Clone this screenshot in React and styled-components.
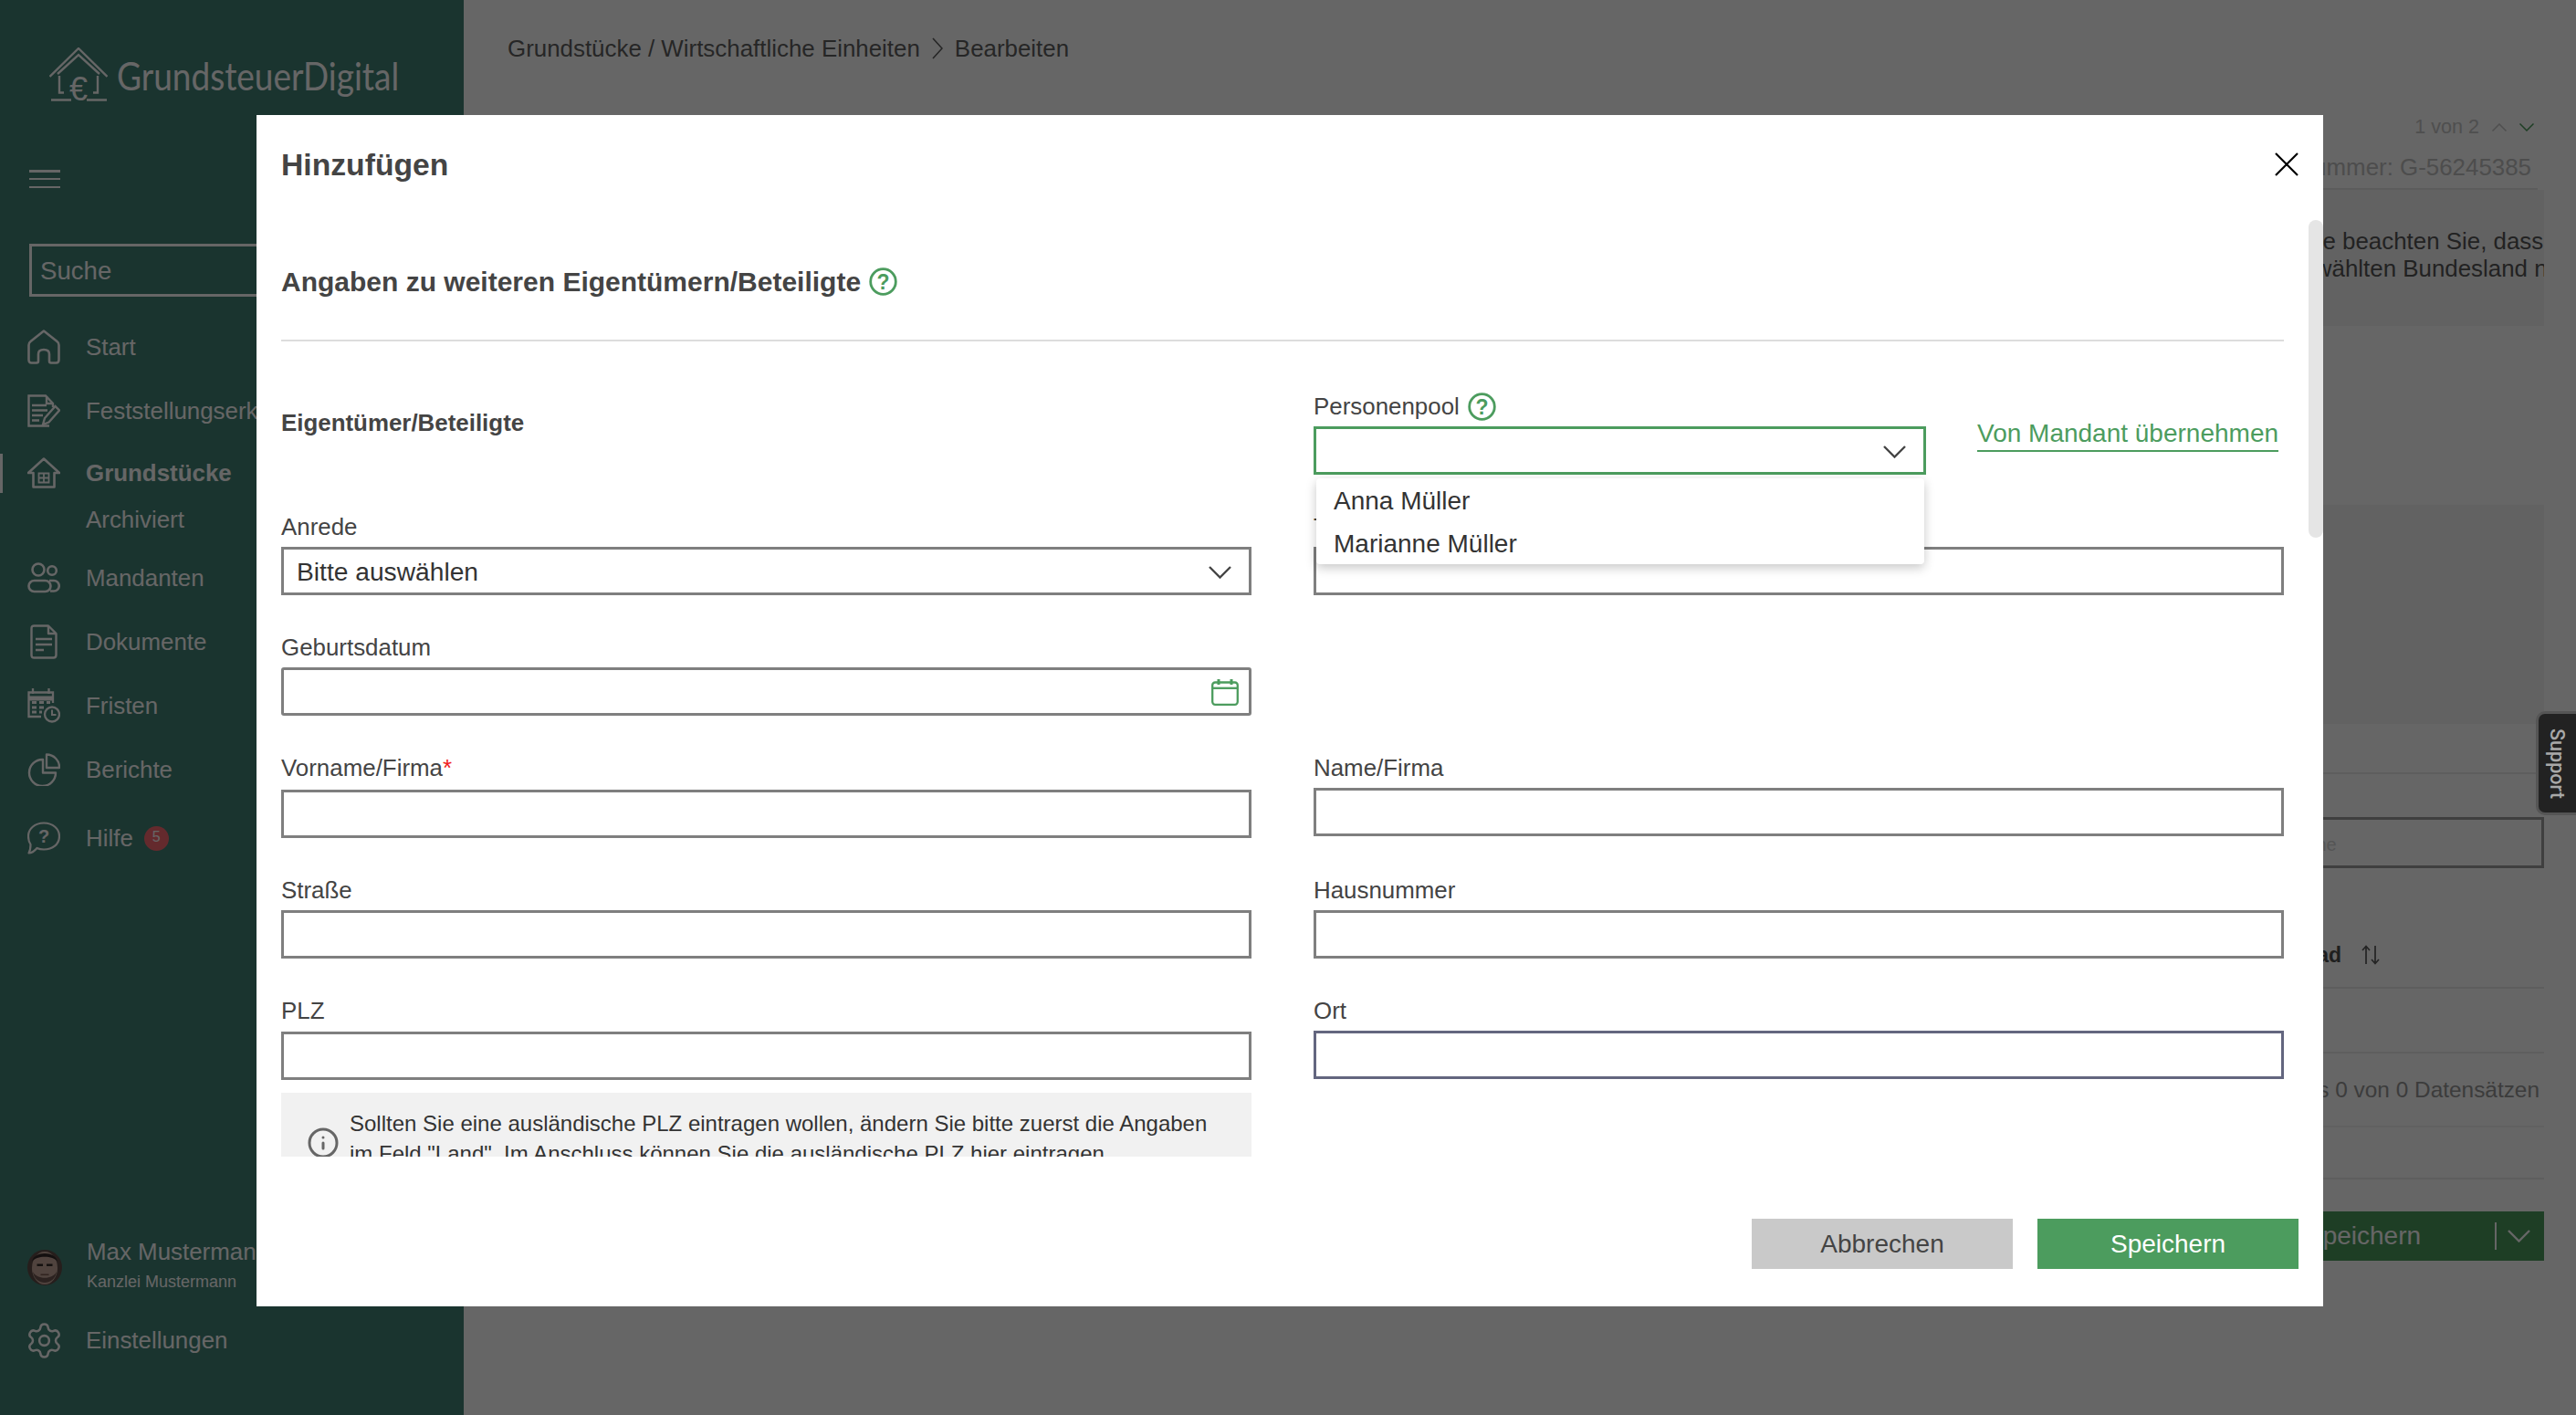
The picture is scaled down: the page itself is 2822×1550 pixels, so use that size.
import React from "react";
import styled, { createGlobalStyle } from "styled-components";
import { Settings, Info } from "lucide-react";

const GlobalStyle = createGlobalStyle`
  html, body {
    margin: 0;
    padding: 0;
    background: #fff;
  }
  * {
    box-sizing: border-box;
  }
  body {
    font-family: "Liberation Sans", Arial, sans-serif;
  }
`;

const green = "#4c9c5e";

const Page = styled.div`
  display: flex;
  width: 2822px;
  height: 1550px;
  overflow: hidden;
  background: #fff;
`;

/* ---------- sidebar ---------- */

const Sidebar = styled.aside`
  display: flex;
  flex-direction: column;
  flex: 0 0 508px;
  height: 100%;
  overflow: hidden;
  background: #428276;
  color: #fff;
`;

const LogoRow = styled.div`
  display: flex;
  align-items: center;
  height: 60px;
  margin: 52px 0 0 54px;
`;

const LogoText = styled.span`
  margin-left: 10px;
  font-family: "Lato", sans-serif;
  font-weight: 400;
  font-size: 43px;
  white-space: nowrap;
  transform: scaleX(0.86);
  transform-origin: left center;
`;

const Burger = styled.div`
  display: flex;
  flex-direction: column;
  justify-content: space-between;
  width: 34px;
  height: 20px;
  margin: 74px 0 0 32px;

  span {
    display: block;
    height: 2.5px;
    background: #fff;
  }
`;

const Search = styled.div`
  display: flex;
  align-items: center;
  width: 444px;
  height: 58px;
  margin: 61px 0 20px 32px;
  padding: 2px 0 0 9px;
  border: 3px solid #fff;
  font-size: 27.6px;
`;

const NavRow = styled.div`
  position: relative;
  display: flex;
  align-items: center;
  gap: 28px;
  height: ${(p) => p.$h || 70}px;
  margin-top: ${(p) => p.$top || 0}px;
  padding-left: 30px;
  font-size: 25.9px;
  font-weight: ${(p) => (p.$active ? 700 : 400)};
  white-space: nowrap;

  ${(p) =>
    p.$active &&
    `&::before {
      content: "";
      position: absolute;
      left: 0;
      top: 12px;
      width: 3px;
      height: 43px;
      background: #fff;
    }`}
`;

const NavIcon = styled.span`
  display: flex;
  justify-content: center;
  flex: 0 0 36px;
  width: 36px;
  min-width: 0;

  svg {
    flex: none;
  }
`;

const SubNav = styled.div`
  height: 36px;
  padding-left: 94px;
  font-size: 25.9px;
  line-height: 36px;
`;

const Badge = styled.span`
  display: flex;
  align-items: center;
  justify-content: center;
  width: 27px;
  height: 27px;
  margin-left: -16px;
  padding-bottom: 3px;
  border-radius: 50%;
  background: #fb6a72;
  font-size: 16px;
`;

const SideFooter = styled.div`
  margin-top: auto;
  padding-bottom: 47px;
`;

const UserRow = styled.div`
  display: flex;
  align-items: center;
  gap: 27px;
  height: 66px;
  margin-bottom: 12px;
  padding-left: 30px;
`;

const UserText = styled.div`
  padding-bottom: 4px;
`;

const UserName = styled.div`
  font-size: 25.9px;
  line-height: 36px;
  white-space: nowrap;
`;

const UserFirm = styled.div`
  font-size: 18px;
  line-height: 30px;
  white-space: nowrap;
`;

/* ---------- page behind the dialog ---------- */

const Main = styled.main`
  display: flex;
  flex-direction: column;
  flex: 1;
  padding: 35px 35px 0 48px;
  color: #5f5f5f;
`;

const Breadcrumb = styled.div`
  display: flex;
  align-items: center;
  gap: 13px;
  height: 36px;
  font-size: 25.9px;
  white-space: nowrap;
`;

const BackPanel = styled.div`
  display: flex;
  flex-direction: column;
  align-self: flex-end;
  width: 287px;
  margin-top: 53px;
`;

const Pager = styled.div`
  display: flex;
  justify-content: flex-end;
  align-items: center;
  gap: 14px;
  height: 30px;
  padding-right: 11px;
  color: #c5c5c5;
  font-size: 21.6px;
`;

const NumberRow = styled.div`
  display: flex;
  justify-content: flex-end;
  align-items: center;
  height: 47px;
  margin-top: 7px;
  padding-right: 7px;
  margin-right: 7px;
  border-bottom: 2px solid #e6e6e6;
  color: #c0c0c0;
  font-size: 25.9px;
  white-space: nowrap;
`;

const Notice = styled.div`
  height: 149px;
  padding: 41px 0 0 7px;
  overflow: hidden;
  background: #f5f5f5;
  color: #555;
  font-size: 25.9px;
  line-height: 30px;
  white-space: nowrap;
`;

const NoticeGap = styled.div`
  height: 240px;
  margin-top: 196px;
  background: #f5f5f5;
`;

const BackRow = styled.div`
  display: flex;
  justify-content: flex-end;
  align-items: center;
  gap: ${(p) => p.$gap || 0}px;
  height: ${(p) => p.$h}px;
  padding: ${(p) => p.$pad || "0"};
  border-bottom: 2px solid ${(p) => p.$line || "#ebebeb"};
  font-size: ${(p) => p.$size || 24.4}px;
  color: ${(p) => p.$color || "#969696"};
  font-weight: ${(p) => p.$weight || 400};
  white-space: nowrap;
  overflow: hidden;

  svg {
    flex: none;
  }
`;

const BackInput = styled.div`
  display: flex;
  align-items: center;
  height: 56px;
  margin-top: 47px;
  padding-top: 4px;
  border: 3px solid #9d9d9d;
  color: #d4d4d4;
  font-size: 20px;
`;

const BackButton = styled.div`
  display: flex;
  align-items: center;
  justify-content: space-between;
  height: 54px;
  margin-top: 35px;
  padding: 0 15px 0 26px;
  background: ${green};
  color: #fff;
  font-size: 28px;
  overflow: hidden;
  white-space: nowrap;
`;

const BackButtonEnd = styled.span`
  display: flex;
  align-items: center;
  padding-left: 12px;
  height: 30px;
  border-left: 2px solid #fff;
`;

/* ---------- dialog ---------- */

const Overlay = styled.div`
  position: fixed;
  inset: 0;
  background: rgba(0, 0, 0, 0.6);
`;

const SupportTab = styled.div`
  position: fixed;
  top: 779px;
  right: 0;
  display: flex;
  align-items: center;
  justify-content: center;
  width: 44px;
  height: 114px;
  border: 3px solid #555;
  border-right: 0;
  border-radius: 10px 0 0 10px;
  background: #222;
  color: #a8a8a8;
  font-family: "Roboto", sans-serif;
  font-weight: 500;
  font-size: 21.6px;
  writing-mode: vertical-rl;
`;

const Modal = styled.div`
  position: fixed;
  left: 281px;
  top: 126px;
  display: flex;
  flex-direction: column;
  width: 2264px;
  height: 1305px;
  background: #fff;
  color: #444;
`;

const ModalHead = styled.div`
  display: flex;
  align-items: center;
  justify-content: space-between;
  height: 108px;
  margin-bottom: 7px;
  padding: 0 27px;
`;

const ModalTitle = styled.h2`
  margin: 0;
  font-size: 33.7px;
  font-weight: 700;
`;

const ModalBody = styled.div`
  position: relative;
  height: 1026px;
  padding: 48px 43px 0 27px;
  overflow: hidden;
`;

const ScrollThumb = styled.div`
  position: absolute;
  top: 0;
  right: 0;
  width: 16px;
  height: 348px;
  border-radius: 8px;
  background: #e5e5e5;
`;

const SectionHead = styled.div`
  display: flex;
  align-items: center;
  gap: 9px;
  height: 85px;
  padding-bottom: 45px;
  border-bottom: 2px solid #ddd;
`;

const SectionTitle = styled.h3`
  margin: 2px 0 0;
  font-size: 30px;
  font-weight: 700;
  line-height: 40px;
`;

const FormGrid = styled.div`
  display: grid;
  grid-template-columns: 1063px 1063px;
  column-gap: 68px;
  row-gap: 41px;
  margin-top: 55px;
`;

const GroupTitle = styled.div`
  margin-top: 18px;
  font-size: 25.9px;
  font-weight: 700;
  line-height: 32px;
`;

const Field = styled.div`
  position: relative;
`;

const Label = styled.label`
  display: flex;
  align-items: center;
  gap: 9px;
  height: 32px;
  margin-bottom: ${(p) => p.$gap || 6}px;
  font-size: 25.9px;
  line-height: 32px;
`;

const Required = styled.span`
  margin-left: -9px;
  color: #f02020;
`;

const TextInput = styled.input`
  display: block;
  width: 100%;
  height: 53px;
  padding: 0 13px;
  border: 3px solid ${(p) => p.$border || "#7f7f7f"};
  border-radius: 0;
  outline: none;
  background: #fff;
  font-family: inherit;
  font-size: 28px;
`;

const SelectBox = styled.div`
  display: flex;
  align-items: center;
  justify-content: space-between;
  height: 53px;
  padding: 2px ${(p) => p.$right || 19}px 0 14px;
  border: 3px solid ${(p) => p.$border || "#7f7f7f"};
  border-radius: ${(p) => (p.$round ? 3 : 0)}px;
  color: #333;
  font-size: 28.2px;
`;

const PoolRow = styled.div`
  display: flex;
  gap: 56px;
`;

const PoolField = styled.div`
  position: relative;
  flex: 0 0 671px;
`;

const Dropdown = styled.ul`
  position: absolute;
  z-index: 5;
  left: 3px;
  top: 95px;
  width: 666px;
  height: 94px;
  margin: 0;
  padding: 1px 0 0;
  border-radius: 4px;
  background: #fff;
  box-shadow: 0 4px 12px rgba(0, 0, 0, 0.22);
  list-style: none;
`;

const DropdownItem = styled.li`
  height: 47px;
  padding-left: 19px;
  color: #333;
  font-size: 28px;
  line-height: 47px;
`;

const TakeOver = styled.a`
  align-self: flex-start;
  margin-top: 28px;
  border-bottom: 2px solid ${green};
  color: ${green};
  font-size: 28px;
  line-height: 36px;
  white-space: nowrap;
`;

const Note = styled.div`
  display: flex;
  align-items: center;
  gap: 11px;
  margin-top: 14px;
  padding: 17px 28px;
  background: #f1f1f1;
  color: #333;
  font-size: 24px;
  line-height: 33px;
  white-space: nowrap;

  svg {
    flex: none;
    margin-top: 9px;
    color: #666;
  }
`;

const ModalFoot = styled.div`
  display: flex;
  justify-content: flex-end;
  gap: 27px;
  padding: 68px 27px 0 0;
`;

const FootButton = styled.button`
  width: 286px;
  height: 55px;
  border: 0;
  background: ${(p) => (p.$primary ? green : "#c9c9c9")};
  color: ${(p) => (p.$primary ? "#fff" : "#444")};
  font-family: inherit;
  font-size: 28px;
`;

/* ---------- drawings ---------- */

const LogoIcon = () => (
  <svg width="64" height="60" viewBox="0 0 64 60" fill="none" stroke="#fff" strokeWidth="2.4">
    <path d="M0.5 32 L32 1 L63.5 32" />
    <path d="M9 29 L32 8 L55 29" />
    <path d="M11 31 V49.5 H16" />
    <path d="M53 31 V49.5 H48" />
    <path d="M2 57.5 H24 M41 57.5 H63" />
    <text x="32" y="58" textAnchor="middle" fontFamily="Liberation Sans" fontSize="36" fill="#fff" stroke="none">€</text>
  </svg>
);

const HomeIcon = () => (
  <svg width="36" height="38" viewBox="0 0 36 38" fill="none" stroke="#fff" strokeWidth="2.6" strokeLinejoin="round">
    <path d="M1.5 17 Q1.5 14.5 3.5 13 L18 1.5 L32.5 13 Q34.5 14.5 34.5 17 V33 Q34.5 36.5 31.5 36.5 H26 Q24 36.5 24 34.5 V27 Q24 22 18 22 Q12 22 12 27 V34.5 Q12 36.5 10 36.5 H4.5 Q1.5 36.5 1.5 33 Z" />
  </svg>
);

const FormIcon = () => (
  <svg width="36" height="36" viewBox="0 0 36 36" fill="none" stroke="#fff" strokeWidth="2.4">
    <path d="M24 34.5 H1.5 V1.5 H20 L28 10 V14" />
    <path d="M21 2 V10 H28" />
    <path d="M5 12 H21 M5 17.5 H22 M5 23 H17 M5 28.5 H13" />
    <path d="M17 33 L19 26 L30.5 13 L35 17.5 L23.5 30.5 Z" />
  </svg>
);

const PlotIcon = () => (
  <svg width="36" height="34" viewBox="0 0 36 34" fill="none" stroke="#fff" strokeWidth="2.6">
    <path d="M1 17 L18 1.5 L35 17 H29.5 V32.5 H6.5 V17 Z" strokeLinejoin="round" />
    <path d="M12.5 17.5 H23.5 V27.5 H12.5 Z M18 17.5 V27.5 M12.5 22.5 H23.5" strokeWidth="1.8" />
  </svg>
);

const ClientsIcon = () => (
  <svg width="36" height="34" viewBox="0 0 36 34" fill="none" stroke="#fff" strokeWidth="2.6">
    <circle cx="12" cy="8" r="6.5" />
    <circle cx="27" cy="9" r="4.8" />
    <rect x="1.5" y="20" width="24" height="12" rx="6" />
    <path d="M24 20 H29 A5.5 5.5 0 0 1 29 31.5 H25" />
  </svg>
);

const DocumentIcon = () => (
  <svg width="30" height="38" viewBox="0 0 30 38" fill="none" stroke="#fff" strokeWidth="2.4" strokeLinejoin="round">
    <path d="M4.5 1.5 H20 L28.5 10 V33.5 Q28.5 36.5 25.5 36.5 H4.5 Q1.5 36.5 1.5 33.5 V4.5 Q1.5 1.5 4.5 1.5 Z" />
    <path d="M20 2 V10 H28" />
    <path d="M6 16 H24 M6 22 H24 M6 28 H15" />
  </svg>
);

const DeadlineIcon = () => (
  <svg width="36" height="38" viewBox="0 0 36 38" fill="none" stroke="#fff" strokeWidth="2.3">
    <path d="M15 31 H1.5 V4.5 H28 V16" />
    <path d="M1.5 11 H28" strokeWidth="5" />
    <path d="M6 0 V6 M23.5 0 V6" />
    <path d="M5 15.5 H10 M13 15.5 H18 M21 15.5 H25 M5 21 H10 M13 21 H18 M5 26 H10 M13 26 H16" strokeWidth="3" />
    <circle cx="27" cy="28.5" r="8" />
    <path d="M27 23.5 V29 H31.5" strokeWidth="2" />
  </svg>
);

const ReportIcon = () => (
  <svg width="36" height="36" viewBox="0 0 36 36" fill="none" stroke="#fff" strokeWidth="2.4" strokeLinejoin="round">
    <path d="M17 7 A14.5 14.5 0 1 0 31 21.5 H17 Z" />
    <path d="M21 1.5 A14 14 0 0 1 35 16 H21 Z" />
  </svg>
);

const HelpBubbleIcon = () => (
  <svg width="36" height="36" viewBox="0 0 36 36" fill="none" stroke="#fff" strokeWidth="2.2" strokeLinejoin="round">
    <path d="M18 1.5 C28 1.5 35 8 35 16 C35 25 27.5 30.5 18 30.5 C15 30.5 12.5 30 10.5 29 C8 32 4 34.5 1.5 34.5 C3 32 3.5 28.5 3.5 25 C1.8 22.5 1 19.5 1 16 C1 8 8 1.5 18 1.5 Z" />
    <text x="18" y="23" textAnchor="middle" fontFamily="Liberation Sans" fontWeight="700" fontSize="20" fill="#fff" stroke="none">?</text>
  </svg>
);

const Avatar = () => (
  <svg width="38" height="39" viewBox="0 0 38 39">
    <defs>
      <clipPath id="avatarClip">
        <ellipse cx="19" cy="19.5" rx="19" ry="19.5" />
      </clipPath>
    </defs>
    <g clipPath="url(#avatarClip)">
      <rect width="38" height="39" fill="#5f4d48" />
      <ellipse cx="19" cy="20" rx="14" ry="18" fill="#c7a99c" />
      <path d="M5 13 C7 1 31 1 33 13 C28 6 10 6 5 13 Z" fill="#332a28" />
      <path d="M6 24 C8 40 30 40 32 24 C28 33 10 33 6 24 Z" fill="#6e5650" />
      <rect x="10.5" y="15.5" width="6.5" height="2.4" fill="#2f2624" />
      <rect x="21" y="15.5" width="6.5" height="2.4" fill="#2f2624" />
      <rect x="14.5" y="26.5" width="9" height="1.6" fill="#7d5a52" />
    </g>
  </svg>
);

const Chevron = ({ color = "#444" }) => (
  <svg width="25" height="14" viewBox="0 0 25 14" fill="none" stroke={color} strokeWidth="2.4">
    <path d="M1 1 L12.5 12.5 L24 1" />
  </svg>
);

const SmallChevron = ({ color, up }) => (
  <svg width="16" height="9" viewBox="0 0 16 9" fill="none" stroke={color} strokeWidth="1.5">
    <path d={up ? "M0.5 8.5 L8 1 L15.5 8.5" : "M0.5 0.5 L8 8 L15.5 0.5"} />
  </svg>
);

const SortIcon = () => (
  <svg width="20" height="22" viewBox="0 0 20 22" fill="none" stroke="#5a5a5a" strokeWidth="1.7">
    <path d="M5 21 V1.5 M1 6 L5 1.5 L9 6" />
    <path d="M15 1 V20.5 M11 16 L15 20.5 L19 16" />
  </svg>
);

const HelpIcon = () => (
  <svg width="31" height="31" viewBox="0 0 31 31" fill="none" stroke={green} strokeWidth="2.8">
    <circle cx="15.5" cy="15.5" r="13.8" />
    <text x="15.5" y="23.5" textAnchor="middle" fontFamily="Liberation Sans" fontWeight="700" fontSize="23" fill={green} stroke="none">?</text>
  </svg>
);

const CloseIcon = () => (
  <svg width="26" height="26" viewBox="0 0 26 26" fill="none" stroke="#000" strokeWidth="2.2">
    <path d="M1 1 L25 25 M25 1 L1 25" />
  </svg>
);

const CalendarIcon = () => (
  <svg width="30" height="29" viewBox="0 0 30 29" fill="none" stroke={green} strokeWidth="2.3">
    <rect x="1.2" y="3.5" width="27.6" height="24.3" rx="3" />
    <path d="M1.2 9.8 H28.8" />
    <path d="M8 0 V6 M22 0 V6" strokeWidth="3" />
  </svg>
);

const App = () => (
  <Page>
    <GlobalStyle />

    <Sidebar>
      <LogoRow>
        <LogoIcon />
        <LogoText>GrundsteuerDigital</LogoText>
      </LogoRow>
      <Burger>
        <span />
        <span />
        <span />
      </Burger>
      <Search>Suche</Search>

      <NavRow>
        <NavIcon><HomeIcon /></NavIcon>
        Start
      </NavRow>
      <NavRow>
        <NavIcon><FormIcon /></NavIcon>
        Feststellungserklärungen
      </NavRow>
      <NavRow $active $h={66}>
        <NavIcon><PlotIcon /></NavIcon>
        Grundstücke
      </NavRow>
      <SubNav>Archiviert</SubNav>
      <NavRow $top={11}>
        <NavIcon><ClientsIcon /></NavIcon>
        Mandanten
      </NavRow>
      <NavRow>
        <NavIcon><DocumentIcon /></NavIcon>
        Dokumente
      </NavRow>
      <NavRow>
        <NavIcon><DeadlineIcon /></NavIcon>
        Fristen
      </NavRow>
      <NavRow>
        <NavIcon><ReportIcon /></NavIcon>
        Berichte
      </NavRow>
      <NavRow $top={5}>
        <NavIcon><HelpBubbleIcon /></NavIcon>
        Hilfe
        <Badge>5</Badge>
      </NavRow>

      <SideFooter>
        <UserRow>
          <Avatar />
          <UserText>
            <UserName>Max Mustermann</UserName>
            <UserFirm>Kanzlei Mustermann</UserFirm>
          </UserText>
        </UserRow>
        <NavRow>
          <NavIcon><Settings size={43} strokeWidth={1.4} /></NavIcon>
          Einstellungen
        </NavRow>
      </SideFooter>
    </Sidebar>

    <Main>
      <Breadcrumb>
        Grundstücke / Wirtschaftliche Einheiten
        <svg width="12" height="24" viewBox="0 0 12 24" fill="none" stroke="#5f5f5f" strokeWidth="1.6">
          <path d="M1 1 L11 12 L1 23" />
        </svg>
        Bearbeiten
      </Breadcrumb>

      <BackPanel>
        <Pager>
          1 von 2
          <SmallChevron color="#c5c5c5" up />
          <SmallChevron color={green} />
        </Pager>
        <NumberRow>Grundstücksnummer: G-56245385</NumberRow>
        <Notice>
          Bitte beachten Sie, dass die Angaben
          <br />
          gewählten Bundesland nicht
        </Notice>
        <NoticeGap />
        <BackRow $h={55} />
        <BackInput>Suche</BackInput>
        <BackRow $h={132} $gap={22} $pad="60px 180px 0 0" $size={23} $color="#4e4e4e" $weight={700}>
          Bearbeitungsgrad
          <SortIcon />
        </BackRow>
        <BackRow $h={71} />
        <BackRow $h={81} $line="#f2f2f2" $pad="0 5px 0 0">
          bis 0 von 0 Datensätzen
        </BackRow>
        <BackRow $h={57} />
        <BackButton>
          <span>Speichern</span>
          <BackButtonEnd>
            <Chevron color="#fff" />
          </BackButtonEnd>
        </BackButton>
      </BackPanel>
    </Main>

    <Overlay />
    <SupportTab>Support</SupportTab>

    <Modal>
      <ModalHead>
        <ModalTitle>Hinzufügen</ModalTitle>
        <CloseIcon />
      </ModalHead>

      <ModalBody>
        <ScrollThumb />
        <SectionHead>
          <SectionTitle>Angaben zu weiteren Eigentümern/Beteiligte</SectionTitle>
          <HelpIcon />
        </SectionHead>

        <FormGrid>
          <GroupTitle>Eigentümer/Beteiligte</GroupTitle>
          <PoolRow>
            <PoolField>
              <Label>
                Personenpool
                <HelpIcon />
              </Label>
              <SelectBox $border={green}>
                <span />
                <Chevron />
              </SelectBox>
              <Dropdown>
                <DropdownItem>Anna Müller</DropdownItem>
                <DropdownItem>Marianne Müller</DropdownItem>
              </Dropdown>
            </PoolField>
            <TakeOver>Von Mandant übernehmen</TakeOver>
          </PoolRow>

          <Field>
            <Label>Anrede</Label>
            <SelectBox>
              Bitte auswählen
              <Chevron />
            </SelectBox>
          </Field>
          <Field>
            <Label>Titel</Label>
            <TextInput />
          </Field>

          <Field>
            <Label>Geburtsdatum</Label>
            <SelectBox $round $right={11}>
              <span />
              <CalendarIcon />
            </SelectBox>
          </Field>
          <div />

          <Field>
            <Label $gap={8}>
              Vorname/Firma<Required>*</Required>
            </Label>
            <TextInput />
          </Field>
          <Field>
            <Label>Name/Firma</Label>
            <TextInput />
          </Field>

          <Field>
            <Label>Straße</Label>
            <TextInput />
          </Field>
          <Field>
            <Label>Hausnummer</Label>
            <TextInput />
          </Field>

          <Field>
            <Label $gap={7}>PLZ</Label>
            <TextInput />
            <Note>
              <Info size={36} strokeWidth={2} />
              <div>
                Sollten Sie eine ausländische PLZ eintragen wollen, ändern Sie bitte zuerst die Angaben
                <br />
                im Feld "Land". Im Anschluss können Sie die ausländische PLZ hier eintragen.
              </div>
            </Note>
          </Field>
          <Field>
            <Label>Ort</Label>
            <TextInput $border="#63667f" />
          </Field>
        </FormGrid>
      </ModalBody>

      <ModalFoot>
        <FootButton>Abbrechen</FootButton>
        <FootButton $primary>Speichern</FootButton>
      </ModalFoot>
    </Modal>
  </Page>
);

export default App;
